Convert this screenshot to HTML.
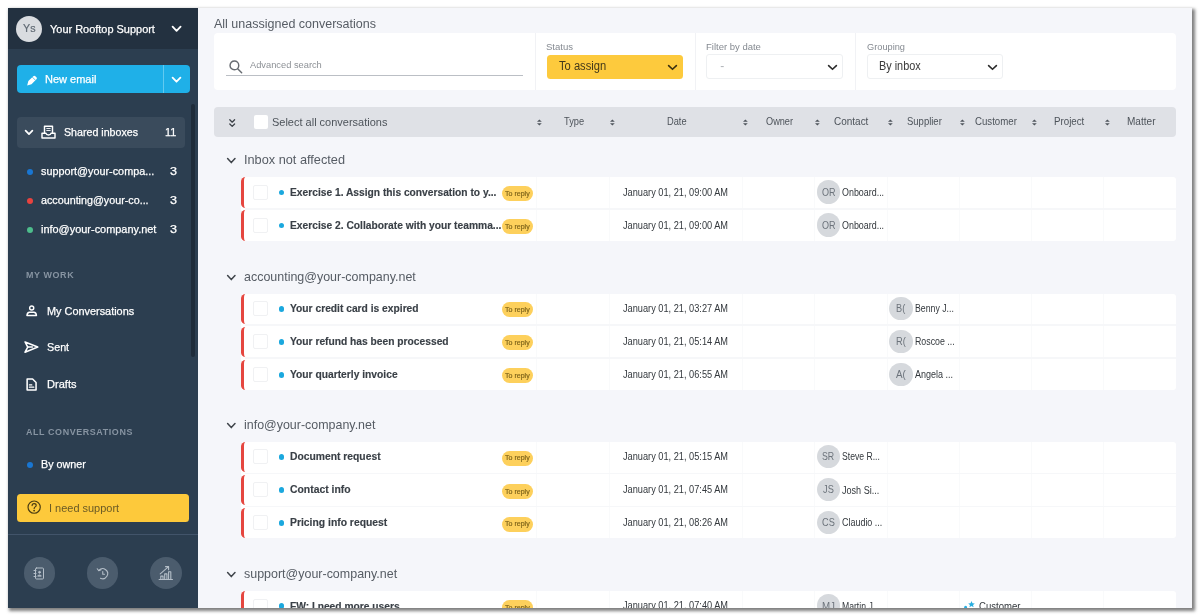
<!DOCTYPE html>
<html><head><meta charset="utf-8"><title>Inbox</title>
<style>
*{box-sizing:border-box;margin:0;padding:0}
html,body{width:1200px;height:616px;background:#fff;overflow:hidden;font-family:"Liberation Sans",sans-serif;}
#app{position:absolute;left:8px;top:8px;width:1184px;height:600px;background:#f5f6fa;overflow:hidden;will-change:transform;}
#shadow{position:absolute;left:8px;top:8px;width:1184px;height:600px;box-shadow:2px 2px 3px 1px rgba(0,0,0,.5);}
.abs{position:absolute}
#side{position:absolute;left:0;top:0;width:190px;height:600px;background:#2c3e50;color:#fff}
#shead{position:absolute;left:0;top:0;width:190px;height:40.6px;background:#233140}
.t{position:absolute;white-space:nowrap;line-height:1;transform-origin:0 50%;}
svg{position:absolute;overflow:visible}
</style></head>
<body>
<div id="shadow"></div>
<div id="app">
<div id="side">
<div id="shead"></div>
<div class="abs" style="left:7.7px;top:7.7px;width:26.8px;height:26.8px;background:#d9dce0;border-radius:14px;"></div>
<div class="t" style="left:14.7px;top:15.01px;font-size:10.6px;color:#5f6973;font-weight:normal;letter-spacing:0px;-webkit-text-stroke:0.2px #5f6973;transform:scaleX(1.0101)">Ys</div>
<div class="t" style="left:42.3px;top:16.01px;font-size:11.2px;color:#fff;font-weight:normal;letter-spacing:0px;-webkit-text-stroke:0.25px #fff;transform:scaleX(0.9787)">Your Rooftop Support</div>
<svg style="left:163.5px;top:18.1px" width="9.2" height="5.6" viewBox="0 0 9.2 5.6"><path d="M0.6 0.6 L4.6 4.8 L8.6 0.6" fill="none" stroke="#fff" stroke-width="1.8" stroke-linecap="round" stroke-linejoin="round"/></svg>
<div class="abs" style="left:9.2px;top:57.2px;width:172.9px;height:28.1px;background:#1fb0e8;border-radius:4px;"></div>
<div class="abs" style="left:154.9px;top:57.2px;width:1.0px;height:28.1px;background:#62caf0;border-radius:0px;"></div>
<svg style="left:18.0px;top:66.5px" width="11.6" height="11.6" viewBox="-12 -12 24 24" ><g transform="rotate(45)"><path d="M-4.600 -9a3 3 0 0 1 3-3h3.200a3 3 0 0 1 3 3V5.500L0 13.500L-4.600 5.500Z" fill="#fff"/><path d="M-4.600 -6.200H4.600" stroke="#1eb1e8" stroke-width="1.400"/></g></svg>
<div class="t" style="left:37.0px;top:66.01px;font-size:11.2px;color:#fff;font-weight:normal;letter-spacing:0px;-webkit-text-stroke:0.25px #fff;transform:scaleX(0.9840)">New email</div>
<svg style="left:164.2px;top:68.7px" width="9" height="5.5" viewBox="0 0 9 5.5"><path d="M0.6 0.6 L4.5 4.7 L8.4 0.6" fill="none" stroke="#fff" stroke-width="1.8" stroke-linecap="round" stroke-linejoin="round"/></svg>
<div class="abs" style="left:183.3px;top:96.0px;width:3.3px;height:252.5px;background:#1f2c3a;border-radius:2px;"></div>
<div class="abs" style="left:8.7px;top:108.7px;width:168.3px;height:31.8px;background:#3a4b5c;border-radius:4px;"></div>
<svg style="left:16.8px;top:121.7px" width="8" height="5" viewBox="0 0 8 5"><path d="M0.6 0.6 L4.0 4.2 L7.4 0.6" fill="none" stroke="#fff" stroke-width="1.7" stroke-linecap="round" stroke-linejoin="round"/></svg>
<svg style="left:32.6px;top:116.6px" width="15" height="14" viewBox="0 0 30 28" fill="none" stroke="#fff" stroke-width="2.900" stroke-linejoin="round" stroke-linecap="round"><path d="M7 15V2.500h16V15"/><path d="M11.500 7h7M11.500 11h7" stroke-width="1.800"/><path d="M2 16.500h8c.4 2.300 2.400 3.300 5 3.300s4.600-1 5-3.300h8V26H2z"/></svg>
<div class="t" style="left:55.7px;top:119.01px;font-size:11.2px;color:#fff;font-weight:normal;letter-spacing:0px;-webkit-text-stroke:0.25px #fff;transform:scaleX(0.9518)">Shared inboxes</div>
<div class="t" style="left:156.8px;top:119.01px;font-size:11.2px;color:#fff;font-weight:normal;letter-spacing:0px;-webkit-text-stroke:0.25px #fff;transform:scaleX(0.9720)">11</div>
<div class="abs" style="left:18.9px;top:161.3px;width:5.8px;height:5.8px;background:#1976d2;border-radius:3px;"></div>
<div class="t" style="left:32.9px;top:158.01px;font-size:11.2px;color:#fff;font-weight:normal;letter-spacing:0px;-webkit-text-stroke:0.25px #fff;transform:scaleX(0.9669)">support@your-compa...</div>
<div class="t" style="left:162.2px;top:158.01px;font-size:11.2px;color:#fff;font-weight:normal;letter-spacing:0px;-webkit-text-stroke:0.25px #fff;transform:scaleX(1.1228)">3</div>
<div class="abs" style="left:18.9px;top:190.1px;width:5.8px;height:5.8px;background:#e8433f;border-radius:3px;"></div>
<div class="t" style="left:32.9px;top:187.01px;font-size:11.2px;color:#fff;font-weight:normal;letter-spacing:0px;-webkit-text-stroke:0.25px #fff;transform:scaleX(0.9598)">accounting@your-co...</div>
<div class="t" style="left:162.2px;top:187.01px;font-size:11.2px;color:#fff;font-weight:normal;letter-spacing:0px;-webkit-text-stroke:0.25px #fff;transform:scaleX(1.1228)">3</div>
<div class="abs" style="left:18.9px;top:219.4px;width:5.8px;height:5.8px;background:#4dbd8c;border-radius:3px;"></div>
<div class="t" style="left:32.9px;top:216.01px;font-size:11.2px;color:#fff;font-weight:normal;letter-spacing:0px;-webkit-text-stroke:0.25px #fff;transform:scaleX(0.9771)">info@your-company.net</div>
<div class="t" style="left:162.2px;top:216.01px;font-size:11.2px;color:#fff;font-weight:normal;letter-spacing:0px;-webkit-text-stroke:0.25px #fff;transform:scaleX(1.1228)">3</div>
<div class="t" style="left:17.9px;top:263.00px;font-size:9px;color:#8794a2;font-weight:bold;letter-spacing:0.6px;transform:scaleX(0.9929)">MY WORK</div>
<svg style="left:18.0px;top:297.4px" width="11.4" height="11.4" viewBox="0 0 24 24" fill="none" stroke="#fff" stroke-width="3.100" stroke-linejoin="round"><circle cx="12" cy="6.300" r="4.300"/><path d="M2 22.300c.3-4.500 2.800-7 5.500-7h9c2.700 0 5.200 2.500 5.500 7z"/></svg>
<div class="t" style="left:39.2px;top:298.01px;font-size:11.2px;color:#fff;font-weight:normal;letter-spacing:0px;-webkit-text-stroke:0.25px #fff;transform:scaleX(0.9738)">My Conversations</div>
<svg style="left:16.3px;top:333.0px" width="14.8" height="12.2" viewBox="0 0 30 25" fill="none" stroke="#fff" stroke-width="3.200" stroke-linejoin="round" stroke-linecap="round"><path d="M2 2 L28 12.500 L2 23 L7.500 12.500 Z"/><path d="M7.500 12.500H17"/></svg>
<div class="t" style="left:39.2px;top:334.01px;font-size:11.2px;color:#fff;font-weight:normal;letter-spacing:0px;-webkit-text-stroke:0.25px #fff;transform:scaleX(0.9602)">Sent</div>
<svg style="left:18.3px;top:369.7px" width="11.2" height="12.9" viewBox="0 0 22 26" fill="none" stroke="#fff" stroke-width="3.100" stroke-linejoin="round" stroke-linecap="round"><path d="M2 2h11l7 7v15H2z"/><path d="M6.500 14h5M6.500 18.500h9" stroke-width="2.300"/></svg>
<div class="t" style="left:39.2px;top:371.00px;font-size:11.2px;color:#fff;font-weight:normal;letter-spacing:0px;-webkit-text-stroke:0.25px #fff;transform:scaleX(0.9885)">Drafts</div>
<div class="t" style="left:17.9px;top:420.01px;font-size:9px;color:#8794a2;font-weight:bold;letter-spacing:0.6px;transform:scaleX(0.9919)">ALL CONVERSATIONS</div>
<div class="abs" style="left:19.0px;top:454.0px;width:5.7px;height:5.8px;background:#1976d2;border-radius:3px;"></div>
<div class="t" style="left:32.9px;top:451.01px;font-size:11.2px;color:#fff;font-weight:normal;letter-spacing:0px;-webkit-text-stroke:0.25px #fff;transform:scaleX(0.9605)">By owner</div>
<div class="abs" style="left:9.2px;top:486.0px;width:171.6px;height:28.0px;background:#fdc93b;border-radius:3.5px;"></div>
<svg style="left:18.8px;top:492.4px" width="14.3" height="14.3" viewBox="0 0 28 28" fill="none" stroke="#4a3c12" stroke-width="2.300" stroke-linecap="round"><circle cx="14" cy="14" r="12"/><path d="M10 11c0-2.500 1.800-4 4-4s4 1.500 4 3.600c0 2.800-4 3-4 6"/><circle cx="14" cy="20.800" r="0.700" fill="#4a3c12"/></svg>
<div class="t" style="left:41.4px;top:495.01px;font-size:11.2px;color:#6a5a26;font-weight:normal;letter-spacing:0px;transform:scaleX(0.9800)">I need support</div>
<div class="abs" style="left:0.0px;top:526.0px;width:190.0px;height:1.0px;background:#42546a;border-radius:0px;"></div>
<div class="abs" style="left:15.6px;top:549.3px;width:31.4px;height:31.4px;background:#4b5c6d;border-radius:16px;"></div>
<div class="abs" style="left:78.8px;top:549.3px;width:31.4px;height:31.4px;background:#4b5c6d;border-radius:16px;"></div>
<div class="abs" style="left:142.3px;top:549.3px;width:31.4px;height:31.4px;background:#4b5c6d;border-radius:16px;"></div>
<svg style="left:25.3px;top:558.5px" width="12" height="13" viewBox="0 0 24 26" fill="none" stroke="#b4bec8" stroke-width="2" stroke-linejoin="round" stroke-linecap="round"><rect x="5" y="2" width="16" height="22" rx="2"/><path d="M2 7h4M2 13h4M2 19h4"/><circle cx="13" cy="10.500" r="1.800" fill="#b4bec8"/><path d="M9.500 17.500c.5-2.200 6.500-2.200 7 0z" fill="#b4bec8"/></svg>
<svg style="left:88.0px;top:558.5px" width="13" height="13" viewBox="0 0 26 26" fill="none" stroke="#b4bec8" stroke-width="2.200" stroke-linecap="round" stroke-linejoin="round"><path d="M6 6.500A10 10 0 1 1 9 22.500"/><path d="M2.500 3.500l3 4 4.500-2"/><path d="M13.500 9v5.500h3.500"/></svg>
<svg style="left:150.2px;top:556.6px" width="15.6" height="15.6" viewBox="0 0 28 28" fill="none" stroke="#b4bec8" stroke-width="2" stroke-linecap="round" stroke-linejoin="round"><path d="M2 26h24"/><path d="M5 26v-6h4v6M12 26v-10h4v10M19 26v-14h4v14"/><path d="M4 16L19 3M13.500 3H19v5.500"/></svg>
</div>
<div class="t" style="left:205.5px;top:10.00px;font-size:12.5px;color:#565c64;font-weight:normal;letter-spacing:0px;transform:scaleX(1.0006)">All unassigned conversations</div>
<div class="abs" style="left:205.8px;top:25.3px;width:962.0px;height:56.5px;background:#fff;border-radius:4px;"></div>
<div class="abs" style="left:526.6px;top:25.3px;width:1.0px;height:56.5px;background:#f1f2f5;border-radius:0px;"></div>
<div class="abs" style="left:686.8px;top:25.3px;width:1.0px;height:56.5px;background:#f1f2f5;border-radius:0px;"></div>
<div class="abs" style="left:847.0px;top:25.3px;width:1.0px;height:56.5px;background:#f1f2f5;border-radius:0px;"></div>
<svg style="left:220.6px;top:51.6px" width="13.5" height="13.5" viewBox="0 0 27 27" fill="none" stroke="#666b71" stroke-width="2.900" stroke-linecap="round"><circle cx="10.800" cy="10.800" r="8.700"/><path d="M17.300 17.300L25.300 25.300"/></svg>
<div class="abs" style="left:217.8px;top:66.9px;width:297.2px;height:1.1px;background:#bbbfc5;border-radius:0px;"></div>
<div class="t" style="left:241.5px;top:52.01px;font-size:9.6px;color:#8d9196;font-weight:normal;letter-spacing:0px;transform:scaleX(0.9684)">Advanced search</div>
<div class="t" style="left:538.4px;top:34.01px;font-size:9.5px;color:#858a91;font-weight:normal;letter-spacing:0px;transform:scaleX(1.0060)">Status</div>
<div class="t" style="left:698.0px;top:34.01px;font-size:9.5px;color:#858a91;font-weight:normal;letter-spacing:0px;transform:scaleX(0.9996)">Filter by date</div>
<div class="t" style="left:858.5px;top:34.01px;font-size:9.5px;color:#858a91;font-weight:normal;letter-spacing:0px;transform:scaleX(0.9720)">Grouping</div>
<div class="abs" style="left:538.7px;top:46.5px;width:136.6px;height:24.2px;background:#fdca3d;border-radius:3.5px;"></div>
<div class="t" style="left:550.7px;top:52.01px;font-size:12px;color:#42381a;font-weight:normal;letter-spacing:0px;transform:scaleX(0.9309)">To assign</div>
<div class="abs" style="left:698.3px;top:46.2px;width:136.9px;height:24.5px;background:#fff;border-radius:3px;border:1px solid #eef0f2;"></div>
<div class="t" style="left:712.3px;top:52.01px;font-size:12px;color:#b0b4b9;font-weight:normal;letter-spacing:0px;transform:scaleX(1.0000)">-</div>
<div class="abs" style="left:859.0px;top:46.2px;width:136.3px;height:24.5px;background:#fff;border-radius:3px;border:1px solid #eef0f2;"></div>
<div class="t" style="left:870.8px;top:52.01px;font-size:12px;color:#3a3a3a;font-weight:normal;letter-spacing:0px;transform:scaleX(0.9059)">By inbox</div>
<svg style="left:659.8px;top:56.5px" width="9" height="5.1" viewBox="0 0 9 5.1"><path d="M0.6 0.6 L4.5 4.3 L8.4 0.6" fill="none" stroke="#3a3010" stroke-width="1.6" stroke-linecap="round" stroke-linejoin="round"/></svg>
<svg style="left:820.1px;top:56.5px" width="9" height="5.1" viewBox="0 0 9 5.1"><path d="M0.6 0.6 L4.5 4.3 L8.4 0.6" fill="none" stroke="#2b2b2b" stroke-width="1.6" stroke-linecap="round" stroke-linejoin="round"/></svg>
<svg style="left:980.2px;top:56.5px" width="9" height="5.1" viewBox="0 0 9 5.1"><path d="M0.6 0.6 L4.5 4.3 L8.4 0.6" fill="none" stroke="#2b2b2b" stroke-width="1.6" stroke-linecap="round" stroke-linejoin="round"/></svg>
<div class="abs" style="left:205.8px;top:99.1px;width:962.0px;height:29.5px;background:#dfe1e6;border-radius:4px;"></div>
<svg style="left:221.2px;top:110.6px" width="6.4" height="8.4" viewBox="0 0 8 10.500" fill="none" stroke="#3c4148" stroke-width="1.600" stroke-linecap="round" stroke-linejoin="round"><path d="M1 1L4 4L7 1M1 6.200L4 9.200L7 6.200"/></svg>
<div class="abs" style="left:246.0px;top:107.3px;width:14.0px;height:14.0px;background:#fff;border-radius:2px;"></div>
<div class="t" style="left:264.1px;top:109.01px;font-size:10.8px;color:#4d535a;font-weight:normal;letter-spacing:0px;transform:scaleX(1.0173)">Select all conversations</div>
<div class="t" style="left:556.4px;top:109.00px;font-size:10.3px;color:#4d535a;font-weight:normal;letter-spacing:0px;transform:scaleX(0.9002)">Type</div>
<svg style="left:529.4px;top:110.6px" width="4.8" height="7" viewBox="0 0 5 7" ><path d="M0 2.800L2.500 0.300L5 2.800ZM0 4.200L2.500 6.700L5 4.200Z" fill="#50565d"/></svg>
<div class="t" style="left:658.9px;top:109.00px;font-size:10.3px;color:#4d535a;font-weight:normal;letter-spacing:0px;transform:scaleX(0.9005)">Date</div>
<svg style="left:602.3px;top:110.6px" width="4.8" height="7" viewBox="0 0 5 7" ><path d="M0 2.800L2.500 0.300L5 2.800ZM0 4.200L2.500 6.700L5 4.200Z" fill="#50565d"/></svg>
<div class="t" style="left:757.5px;top:109.00px;font-size:10.3px;color:#4d535a;font-weight:normal;letter-spacing:0px;transform:scaleX(0.8903)">Owner</div>
<svg style="left:734.8px;top:110.6px" width="4.8" height="7" viewBox="0 0 5 7" ><path d="M0 2.800L2.500 0.300L5 2.800ZM0 4.200L2.500 6.700L5 4.200Z" fill="#50565d"/></svg>
<div class="t" style="left:826.1px;top:109.00px;font-size:10.3px;color:#4d535a;font-weight:normal;letter-spacing:0px;transform:scaleX(0.9690)">Contact</div>
<svg style="left:807.1px;top:110.6px" width="4.8" height="7" viewBox="0 0 5 7" ><path d="M0 2.800L2.500 0.300L5 2.800ZM0 4.200L2.500 6.700L5 4.200Z" fill="#50565d"/></svg>
<div class="t" style="left:898.5px;top:109.00px;font-size:10.3px;color:#4d535a;font-weight:normal;letter-spacing:0px;transform:scaleX(0.9211)">Supplier</div>
<svg style="left:879.6px;top:110.6px" width="4.8" height="7" viewBox="0 0 5 7" ><path d="M0 2.800L2.500 0.300L5 2.800ZM0 4.200L2.500 6.700L5 4.200Z" fill="#50565d"/></svg>
<div class="t" style="left:967.3px;top:109.00px;font-size:10.3px;color:#4d535a;font-weight:normal;letter-spacing:0px;transform:scaleX(0.9386)">Customer</div>
<svg style="left:952.0px;top:110.6px" width="4.8" height="7" viewBox="0 0 5 7" ><path d="M0 2.800L2.500 0.300L5 2.800ZM0 4.200L2.500 6.700L5 4.200Z" fill="#50565d"/></svg>
<div class="t" style="left:1045.5px;top:109.00px;font-size:10.3px;color:#4d535a;font-weight:normal;letter-spacing:0px;transform:scaleX(0.9450)">Project</div>
<svg style="left:1024.4px;top:110.6px" width="4.8" height="7" viewBox="0 0 5 7" ><path d="M0 2.800L2.500 0.300L5 2.800ZM0 4.200L2.500 6.700L5 4.200Z" fill="#50565d"/></svg>
<div class="t" style="left:1119.0px;top:109.00px;font-size:10.3px;color:#4d535a;font-weight:normal;letter-spacing:0px;transform:scaleX(0.9764)">Matter</div>
<svg style="left:1096.8px;top:110.6px" width="4.8" height="7" viewBox="0 0 5 7" ><path d="M0 2.800L2.500 0.300L5 2.800ZM0 4.200L2.500 6.700L5 4.200Z" fill="#50565d"/></svg>
<svg style="left:219.3px;top:150.0px" width="8.6" height="5.4" viewBox="0 0 8.6 5.4"><path d="M0.6 0.6 L4.3 4.6000000000000005 L8.0 0.6" fill="none" stroke="#3f444a" stroke-width="1.5" stroke-linecap="round" stroke-linejoin="round"/></svg>
<div class="t" style="left:236.1px;top:146.01px;font-size:12.8px;color:#565c64;font-weight:normal;letter-spacing:0px;transform:scaleX(0.9949)">Inbox not affected</div>
<div class="abs" style="left:233.3px;top:169.2px;width:934.5px;height:63.7px;background:#fff;border-radius:3px;"></div>
<div class="abs" style="left:528.0px;top:169.2px;width:1.0px;height:63.7px;background:#f9fafb;border-radius:0px;"></div>
<div class="abs" style="left:600.5px;top:169.2px;width:1.0px;height:63.7px;background:#f9fafb;border-radius:0px;"></div>
<div class="abs" style="left:733.5px;top:169.2px;width:1.0px;height:63.7px;background:#f9fafb;border-radius:0px;"></div>
<div class="abs" style="left:805.8px;top:169.2px;width:1.0px;height:63.7px;background:#f9fafb;border-radius:0px;"></div>
<div class="abs" style="left:878.8px;top:169.2px;width:1.0px;height:63.7px;background:#f9fafb;border-radius:0px;"></div>
<div class="abs" style="left:950.8px;top:169.2px;width:1.0px;height:63.7px;background:#f9fafb;border-radius:0px;"></div>
<div class="abs" style="left:1023.2px;top:169.2px;width:1.0px;height:63.7px;background:#f9fafb;border-radius:0px;"></div>
<div class="abs" style="left:1095.2px;top:169.2px;width:1.0px;height:63.7px;background:#f9fafb;border-radius:0px;"></div>
<div class="abs" style="left:233.3px;top:169.2px;width:6.7px;height:30.5px;background:#fff;border-radius:0px;border-left:3.5px solid #e5463f;border-radius:4.5px 0 0 4.5px;"></div>
<div class="abs" style="left:245.2px;top:176.9px;width:14.6px;height:14.8px;background:#fff;border-radius:2px;border:1px solid #f0f1f3;"></div>
<div class="abs" style="left:270.5px;top:181.7px;width:5.5px;height:5.5px;background:#1ba8de;border-radius:3px;"></div>
<div class="t" style="left:281.9px;top:179.01px;font-size:10.6px;color:#3a4047;font-weight:bold;letter-spacing:0px;-webkit-text-stroke:0.15px #3a4047;transform:scaleX(0.9658)">Exercise 1. Assign this conversation to y...</div>
<div class="abs" style="left:493.7px;top:178.0px;width:30.9px;height:15.2px;background:#fdd05c;border-radius:7.6px;"></div>
<div class="t" style="left:496.8px;top:183.00px;font-size:6.8px;color:#7a6018;font-weight:normal;letter-spacing:0px;-webkit-text-stroke:0.15px #7a6018;transform:scaleX(1.0373)">To reply</div>
<div class="t" style="left:615.3px;top:180.01px;font-size:10px;color:#33383d;font-weight:normal;letter-spacing:0px;transform:scaleX(0.9213)">January 01, 21, 09:00 AM</div>
<div class="abs" style="left:808.5px;top:172.2px;width:23.6px;height:23.6px;background:#d6d9dd;border-radius:12px;"></div>
<div class="t" style="left:813.5px;top:180.01px;font-size:10.2px;color:#6c737b;font-weight:normal;letter-spacing:0px;transform:scaleX(0.8834)">OR</div>
<div class="t" style="left:834.2px;top:180.00px;font-size:10px;color:#33383d;font-weight:normal;letter-spacing:0px;transform:scaleX(0.8907)">Onboard...</div>
<div class="abs" style="left:237.0px;top:200.0px;width:930.8px;height:1.6px;background:#f6f7f9;border-radius:0px;"></div>
<div class="abs" style="left:233.3px;top:202.2px;width:6.7px;height:30.5px;background:#fff;border-radius:0px;border-left:3.5px solid #e5463f;border-radius:4.5px 0 0 4.5px;"></div>
<div class="abs" style="left:245.2px;top:209.9px;width:14.6px;height:14.8px;background:#fff;border-radius:2px;border:1px solid #f0f1f3;"></div>
<div class="abs" style="left:270.5px;top:214.7px;width:5.5px;height:5.5px;background:#1ba8de;border-radius:3px;"></div>
<div class="t" style="left:281.9px;top:212.01px;font-size:10.6px;color:#3a4047;font-weight:bold;letter-spacing:0px;-webkit-text-stroke:0.15px #3a4047;transform:scaleX(0.9678)">Exercise 2. Collaborate with your teamma...</div>
<div class="abs" style="left:493.7px;top:211.0px;width:30.9px;height:15.2px;background:#fdd05c;border-radius:7.6px;"></div>
<div class="t" style="left:496.8px;top:216.00px;font-size:6.8px;color:#7a6018;font-weight:normal;letter-spacing:0px;-webkit-text-stroke:0.15px #7a6018;transform:scaleX(1.0373)">To reply</div>
<div class="t" style="left:615.3px;top:213.01px;font-size:10px;color:#33383d;font-weight:normal;letter-spacing:0px;transform:scaleX(0.9213)">January 01, 21, 09:00 AM</div>
<div class="abs" style="left:808.5px;top:205.2px;width:23.6px;height:23.6px;background:#d6d9dd;border-radius:12px;"></div>
<div class="t" style="left:813.5px;top:213.01px;font-size:10.2px;color:#6c737b;font-weight:normal;letter-spacing:0px;transform:scaleX(0.8834)">OR</div>
<div class="t" style="left:834.2px;top:213.00px;font-size:10px;color:#33383d;font-weight:normal;letter-spacing:0px;transform:scaleX(0.8907)">Onboard...</div>
<svg style="left:219.3px;top:266.7px" width="8.6" height="5.4" viewBox="0 0 8.6 5.4"><path d="M0.6 0.6 L4.3 4.6000000000000005 L8.0 0.6" fill="none" stroke="#3f444a" stroke-width="1.5" stroke-linecap="round" stroke-linejoin="round"/></svg>
<div class="t" style="left:236.1px;top:263.00px;font-size:12.8px;color:#565c64;font-weight:normal;letter-spacing:0px;transform:scaleX(0.9741)">accounting@your-company.net</div>
<div class="abs" style="left:233.3px;top:285.5px;width:934.5px;height:96.7px;background:#fff;border-radius:3px;"></div>
<div class="abs" style="left:528.0px;top:285.5px;width:1.0px;height:96.7px;background:#f9fafb;border-radius:0px;"></div>
<div class="abs" style="left:600.5px;top:285.5px;width:1.0px;height:96.7px;background:#f9fafb;border-radius:0px;"></div>
<div class="abs" style="left:733.5px;top:285.5px;width:1.0px;height:96.7px;background:#f9fafb;border-radius:0px;"></div>
<div class="abs" style="left:805.8px;top:285.5px;width:1.0px;height:96.7px;background:#f9fafb;border-radius:0px;"></div>
<div class="abs" style="left:878.8px;top:285.5px;width:1.0px;height:96.7px;background:#f9fafb;border-radius:0px;"></div>
<div class="abs" style="left:950.8px;top:285.5px;width:1.0px;height:96.7px;background:#f9fafb;border-radius:0px;"></div>
<div class="abs" style="left:1023.2px;top:285.5px;width:1.0px;height:96.7px;background:#f9fafb;border-radius:0px;"></div>
<div class="abs" style="left:1095.2px;top:285.5px;width:1.0px;height:96.7px;background:#f9fafb;border-radius:0px;"></div>
<div class="abs" style="left:233.3px;top:285.5px;width:6.7px;height:30.5px;background:#fff;border-radius:0px;border-left:3.5px solid #e5463f;border-radius:4.5px 0 0 4.5px;"></div>
<div class="abs" style="left:245.2px;top:293.2px;width:14.6px;height:14.8px;background:#fff;border-radius:2px;border:1px solid #f0f1f3;"></div>
<div class="abs" style="left:270.5px;top:298.0px;width:5.5px;height:5.5px;background:#1ba8de;border-radius:3px;"></div>
<div class="t" style="left:281.9px;top:295.00px;font-size:10.6px;color:#3a4047;font-weight:bold;letter-spacing:0px;-webkit-text-stroke:0.15px #3a4047;transform:scaleX(0.9678)">Your credit card is expired</div>
<div class="abs" style="left:493.7px;top:294.3px;width:30.9px;height:15.2px;background:#fdd05c;border-radius:7.6px;"></div>
<div class="t" style="left:496.8px;top:299.00px;font-size:6.8px;color:#7a6018;font-weight:normal;letter-spacing:0px;-webkit-text-stroke:0.15px #7a6018;transform:scaleX(1.0373)">To reply</div>
<div class="t" style="left:615.3px;top:296.00px;font-size:10px;color:#33383d;font-weight:normal;letter-spacing:0px;transform:scaleX(0.9213)">January 01, 21, 03:27 AM</div>
<div class="abs" style="left:881.2px;top:288.5px;width:23.6px;height:23.6px;background:#d6d9dd;border-radius:12px;"></div>
<div class="t" style="left:888.4px;top:296.01px;font-size:10.2px;color:#6c737b;font-weight:normal;letter-spacing:0px;transform:scaleX(0.9031)">B(</div>
<div class="t" style="left:906.9px;top:296.00px;font-size:10px;color:#33383d;font-weight:normal;letter-spacing:0px;transform:scaleX(0.8748)">Benny J...</div>
<div class="abs" style="left:237.0px;top:316.3px;width:930.8px;height:1.6px;background:#f6f7f9;border-radius:0px;"></div>
<div class="abs" style="left:233.3px;top:318.5px;width:6.7px;height:30.5px;background:#fff;border-radius:0px;border-left:3.5px solid #e5463f;border-radius:4.5px 0 0 4.5px;"></div>
<div class="abs" style="left:245.2px;top:326.2px;width:14.6px;height:14.8px;background:#fff;border-radius:2px;border:1px solid #f0f1f3;"></div>
<div class="abs" style="left:270.5px;top:331.0px;width:5.5px;height:5.5px;background:#1ba8de;border-radius:3px;"></div>
<div class="t" style="left:281.9px;top:328.00px;font-size:10.6px;color:#3a4047;font-weight:bold;letter-spacing:0px;-webkit-text-stroke:0.15px #3a4047;transform:scaleX(0.9667)">Your refund has been processed</div>
<div class="abs" style="left:493.7px;top:327.3px;width:30.9px;height:15.2px;background:#fdd05c;border-radius:7.6px;"></div>
<div class="t" style="left:496.8px;top:332.00px;font-size:6.8px;color:#7a6018;font-weight:normal;letter-spacing:0px;-webkit-text-stroke:0.15px #7a6018;transform:scaleX(1.0373)">To reply</div>
<div class="t" style="left:615.3px;top:329.00px;font-size:10px;color:#33383d;font-weight:normal;letter-spacing:0px;transform:scaleX(0.9213)">January 01, 21, 05:14 AM</div>
<div class="abs" style="left:881.2px;top:321.5px;width:23.6px;height:23.6px;background:#d6d9dd;border-radius:12px;"></div>
<div class="t" style="left:888.1px;top:329.01px;font-size:10.2px;color:#6c737b;font-weight:normal;letter-spacing:0px;transform:scaleX(0.9116)">R(</div>
<div class="t" style="left:906.9px;top:329.00px;font-size:10px;color:#33383d;font-weight:normal;letter-spacing:0px;transform:scaleX(0.8794)">Roscoe ...</div>
<div class="abs" style="left:237.0px;top:349.3px;width:930.8px;height:1.6px;background:#f6f7f9;border-radius:0px;"></div>
<div class="abs" style="left:233.3px;top:351.5px;width:6.7px;height:30.5px;background:#fff;border-radius:0px;border-left:3.5px solid #e5463f;border-radius:4.5px 0 0 4.5px;"></div>
<div class="abs" style="left:245.2px;top:359.2px;width:14.6px;height:14.8px;background:#fff;border-radius:2px;border:1px solid #f0f1f3;"></div>
<div class="abs" style="left:270.5px;top:364.0px;width:5.5px;height:5.5px;background:#1ba8de;border-radius:3px;"></div>
<div class="t" style="left:281.9px;top:361.00px;font-size:10.6px;color:#3a4047;font-weight:bold;letter-spacing:0px;-webkit-text-stroke:0.15px #3a4047;transform:scaleX(0.9687)">Your quarterly invoice</div>
<div class="abs" style="left:493.7px;top:360.3px;width:30.9px;height:15.2px;background:#fdd05c;border-radius:7.6px;"></div>
<div class="t" style="left:496.8px;top:365.00px;font-size:6.8px;color:#7a6018;font-weight:normal;letter-spacing:0px;-webkit-text-stroke:0.15px #7a6018;transform:scaleX(1.0373)">To reply</div>
<div class="t" style="left:615.3px;top:362.00px;font-size:10px;color:#33383d;font-weight:normal;letter-spacing:0px;transform:scaleX(0.9213)">January 01, 21, 06:55 AM</div>
<div class="abs" style="left:881.2px;top:354.5px;width:23.6px;height:23.6px;background:#d6d9dd;border-radius:12px;"></div>
<div class="t" style="left:888.1px;top:362.01px;font-size:10.2px;color:#6c737b;font-weight:normal;letter-spacing:0px;transform:scaleX(0.9620)">A(</div>
<div class="t" style="left:906.9px;top:362.00px;font-size:10px;color:#33383d;font-weight:normal;letter-spacing:0px;transform:scaleX(0.9014)">Angela ...</div>
<svg style="left:219.3px;top:414.7px" width="8.6" height="5.4" viewBox="0 0 8.6 5.4"><path d="M0.6 0.6 L4.3 4.6000000000000005 L8.0 0.6" fill="none" stroke="#3f444a" stroke-width="1.5" stroke-linecap="round" stroke-linejoin="round"/></svg>
<div class="t" style="left:236.1px;top:411.00px;font-size:12.8px;color:#565c64;font-weight:normal;letter-spacing:0px;transform:scaleX(0.9725)">info@your-company.net</div>
<div class="abs" style="left:233.3px;top:433.7px;width:934.5px;height:96.7px;background:#fff;border-radius:3px;"></div>
<div class="abs" style="left:528.0px;top:433.7px;width:1.0px;height:96.7px;background:#f9fafb;border-radius:0px;"></div>
<div class="abs" style="left:600.5px;top:433.7px;width:1.0px;height:96.7px;background:#f9fafb;border-radius:0px;"></div>
<div class="abs" style="left:733.5px;top:433.7px;width:1.0px;height:96.7px;background:#f9fafb;border-radius:0px;"></div>
<div class="abs" style="left:805.8px;top:433.7px;width:1.0px;height:96.7px;background:#f9fafb;border-radius:0px;"></div>
<div class="abs" style="left:878.8px;top:433.7px;width:1.0px;height:96.7px;background:#f9fafb;border-radius:0px;"></div>
<div class="abs" style="left:950.8px;top:433.7px;width:1.0px;height:96.7px;background:#f9fafb;border-radius:0px;"></div>
<div class="abs" style="left:1023.2px;top:433.7px;width:1.0px;height:96.7px;background:#f9fafb;border-radius:0px;"></div>
<div class="abs" style="left:1095.2px;top:433.7px;width:1.0px;height:96.7px;background:#f9fafb;border-radius:0px;"></div>
<div class="abs" style="left:233.3px;top:433.7px;width:6.7px;height:30.5px;background:#fff;border-radius:0px;border-left:3.5px solid #e5463f;border-radius:4.5px 0 0 4.5px;"></div>
<div class="abs" style="left:245.2px;top:441.4px;width:14.6px;height:14.8px;background:#fff;border-radius:2px;border:1px solid #f0f1f3;"></div>
<div class="abs" style="left:270.5px;top:446.2px;width:5.5px;height:5.5px;background:#1ba8de;border-radius:3px;"></div>
<div class="t" style="left:281.9px;top:443.01px;font-size:10.6px;color:#3a4047;font-weight:bold;letter-spacing:0px;-webkit-text-stroke:0.15px #3a4047;transform:scaleX(0.9740)">Document request</div>
<div class="abs" style="left:493.7px;top:442.5px;width:30.9px;height:15.2px;background:#fdd05c;border-radius:7.6px;"></div>
<div class="t" style="left:496.8px;top:447.00px;font-size:6.8px;color:#7a6018;font-weight:normal;letter-spacing:0px;-webkit-text-stroke:0.15px #7a6018;transform:scaleX(1.0373)">To reply</div>
<div class="t" style="left:615.3px;top:444.01px;font-size:10px;color:#33383d;font-weight:normal;letter-spacing:0px;transform:scaleX(0.9213)">January 01, 21, 05:15 AM</div>
<div class="abs" style="left:808.5px;top:436.7px;width:23.6px;height:23.6px;background:#d6d9dd;border-radius:12px;"></div>
<div class="t" style="left:814.2px;top:444.01px;font-size:10.2px;color:#6c737b;font-weight:normal;letter-spacing:0px;transform:scaleX(0.8618)">SR</div>
<div class="t" style="left:834.2px;top:444.00px;font-size:10px;color:#33383d;font-weight:normal;letter-spacing:0px;transform:scaleX(0.8632)">Steve R...</div>
<div class="abs" style="left:237.0px;top:464.5px;width:930.8px;height:1.6px;background:#f6f7f9;border-radius:0px;"></div>
<div class="abs" style="left:233.3px;top:466.7px;width:6.7px;height:30.5px;background:#fff;border-radius:0px;border-left:3.5px solid #e5463f;border-radius:4.5px 0 0 4.5px;"></div>
<div class="abs" style="left:245.2px;top:474.4px;width:14.6px;height:14.8px;background:#fff;border-radius:2px;border:1px solid #f0f1f3;"></div>
<div class="abs" style="left:270.5px;top:479.2px;width:5.5px;height:5.5px;background:#1ba8de;border-radius:3px;"></div>
<div class="t" style="left:281.9px;top:476.01px;font-size:10.6px;color:#3a4047;font-weight:bold;letter-spacing:0px;-webkit-text-stroke:0.15px #3a4047;transform:scaleX(0.9806)">Contact info</div>
<div class="abs" style="left:493.7px;top:475.5px;width:30.9px;height:15.2px;background:#fdd05c;border-radius:7.6px;"></div>
<div class="t" style="left:496.8px;top:481.00px;font-size:6.8px;color:#7a6018;font-weight:normal;letter-spacing:0px;-webkit-text-stroke:0.15px #7a6018;transform:scaleX(1.0373)">To reply</div>
<div class="t" style="left:615.3px;top:477.01px;font-size:10px;color:#33383d;font-weight:normal;letter-spacing:0px;transform:scaleX(0.9213)">January 01, 21, 07:45 AM</div>
<div class="abs" style="left:808.5px;top:469.7px;width:23.6px;height:23.6px;background:#d6d9dd;border-radius:12px;"></div>
<div class="t" style="left:814.9px;top:477.01px;font-size:10.2px;color:#6c737b;font-weight:normal;letter-spacing:0px;transform:scaleX(0.9083)">JS</div>
<div class="t" style="left:834.2px;top:478.00px;font-size:10px;color:#33383d;font-weight:normal;letter-spacing:0px;transform:scaleX(0.9066)">Josh Si...</div>
<div class="abs" style="left:237.0px;top:497.5px;width:930.8px;height:1.6px;background:#f6f7f9;border-radius:0px;"></div>
<div class="abs" style="left:233.3px;top:499.7px;width:6.7px;height:30.5px;background:#fff;border-radius:0px;border-left:3.5px solid #e5463f;border-radius:4.5px 0 0 4.5px;"></div>
<div class="abs" style="left:245.2px;top:507.4px;width:14.6px;height:14.8px;background:#fff;border-radius:2px;border:1px solid #f0f1f3;"></div>
<div class="abs" style="left:270.5px;top:512.2px;width:5.5px;height:5.5px;background:#1ba8de;border-radius:3px;"></div>
<div class="t" style="left:281.9px;top:509.01px;font-size:10.6px;color:#3a4047;font-weight:bold;letter-spacing:0px;-webkit-text-stroke:0.15px #3a4047;transform:scaleX(0.9780)">Pricing info request</div>
<div class="abs" style="left:493.7px;top:508.5px;width:30.9px;height:15.2px;background:#fdd05c;border-radius:7.6px;"></div>
<div class="t" style="left:496.8px;top:513.00px;font-size:6.8px;color:#7a6018;font-weight:normal;letter-spacing:0px;-webkit-text-stroke:0.15px #7a6018;transform:scaleX(1.0373)">To reply</div>
<div class="t" style="left:615.3px;top:510.01px;font-size:10px;color:#33383d;font-weight:normal;letter-spacing:0px;transform:scaleX(0.9213)">January 01, 21, 08:26 AM</div>
<div class="abs" style="left:808.5px;top:502.7px;width:23.6px;height:23.6px;background:#d6d9dd;border-radius:12px;"></div>
<div class="t" style="left:813.9px;top:510.01px;font-size:10.2px;color:#6c737b;font-weight:normal;letter-spacing:0px;transform:scaleX(0.9042)">CS</div>
<div class="t" style="left:834.2px;top:510.00px;font-size:10px;color:#33383d;font-weight:normal;letter-spacing:0px;transform:scaleX(0.8949)">Claudio ...</div>
<svg style="left:219.3px;top:563.8px" width="8.6" height="5.4" viewBox="0 0 8.6 5.4"><path d="M0.6 0.6 L4.3 4.6000000000000005 L8.0 0.6" fill="none" stroke="#3f444a" stroke-width="1.5" stroke-linecap="round" stroke-linejoin="round"/></svg>
<div class="t" style="left:236.1px;top:560.01px;font-size:12.8px;color:#565c64;font-weight:normal;letter-spacing:0px;transform:scaleX(0.9742)">support@your-company.net</div>
<div class="abs" style="left:233.3px;top:582.8px;width:934.5px;height:30.7px;background:#fff;border-radius:3px;"></div>
<div class="abs" style="left:528.0px;top:582.8px;width:1.0px;height:30.7px;background:#f9fafb;border-radius:0px;"></div>
<div class="abs" style="left:600.5px;top:582.8px;width:1.0px;height:30.7px;background:#f9fafb;border-radius:0px;"></div>
<div class="abs" style="left:733.5px;top:582.8px;width:1.0px;height:30.7px;background:#f9fafb;border-radius:0px;"></div>
<div class="abs" style="left:805.8px;top:582.8px;width:1.0px;height:30.7px;background:#f9fafb;border-radius:0px;"></div>
<div class="abs" style="left:878.8px;top:582.8px;width:1.0px;height:30.7px;background:#f9fafb;border-radius:0px;"></div>
<div class="abs" style="left:950.8px;top:582.8px;width:1.0px;height:30.7px;background:#f9fafb;border-radius:0px;"></div>
<div class="abs" style="left:1023.2px;top:582.8px;width:1.0px;height:30.7px;background:#f9fafb;border-radius:0px;"></div>
<div class="abs" style="left:1095.2px;top:582.8px;width:1.0px;height:30.7px;background:#f9fafb;border-radius:0px;"></div>
<div class="abs" style="left:233.3px;top:582.8px;width:6.7px;height:30.5px;background:#fff;border-radius:0px;border-left:3.5px solid #e5463f;border-radius:4.5px 0 0 4.5px;"></div>
<div class="abs" style="left:245.2px;top:590.5px;width:14.6px;height:14.8px;background:#fff;border-radius:2px;border:1px solid #f0f1f3;"></div>
<div class="abs" style="left:270.5px;top:595.3px;width:5.5px;height:5.5px;background:#1ba8de;border-radius:3px;"></div>
<div class="t" style="left:281.9px;top:593.01px;font-size:10.6px;color:#3a4047;font-weight:bold;letter-spacing:0px;-webkit-text-stroke:0.15px #3a4047;transform:scaleX(0.9662)">FW: I need more users</div>
<div class="abs" style="left:493.7px;top:591.6px;width:30.9px;height:15.2px;background:#fdd05c;border-radius:7.6px;"></div>
<div class="t" style="left:496.8px;top:597.01px;font-size:6.8px;color:#7a6018;font-weight:normal;letter-spacing:0px;-webkit-text-stroke:0.15px #7a6018;transform:scaleX(1.0373)">To reply</div>
<div class="t" style="left:615.3px;top:593.00px;font-size:10px;color:#33383d;font-weight:normal;letter-spacing:0px;transform:scaleX(0.9213)">January 01, 21, 07:40 AM</div>
<div class="abs" style="left:808.5px;top:585.8px;width:23.6px;height:23.6px;background:#d6d9dd;border-radius:12px;"></div>
<div class="t" style="left:813.8px;top:594.00px;font-size:10.2px;color:#6c737b;font-weight:normal;letter-spacing:0px;transform:scaleX(0.9563)">MJ</div>
<div class="t" style="left:834.2px;top:594.01px;font-size:10px;color:#33383d;font-weight:normal;letter-spacing:0px;transform:scaleX(0.8632)">Martin J...</div>
<svg style="left:955.2px;top:592.7px" width="12" height="11" viewBox="0 0 12 11" ><path d="M8.500 0l1 2.200 2.300.2-1.800 1.500.6 2.300-2.100-1.300-2.100 1.300.6-2.300-1.800-1.500 2.300-.2z" fill="#29aee0"/><circle cx="2.600" cy="6.300" r="1.500" fill="#29aee0"/><path d="M0 11c0-2 1-2.700 2.600-2.700s2.600.7 2.600 2.700z" fill="#29aee0"/></svg>
<div class="t" style="left:971.1px;top:594.01px;font-size:10px;color:#33383d;font-weight:normal;letter-spacing:0px;transform:scaleX(0.9548)">Customer</div>
</div>
</body></html>
